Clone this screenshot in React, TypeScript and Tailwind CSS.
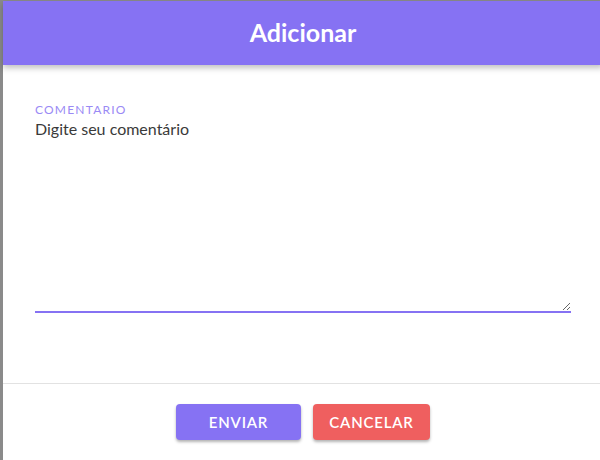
export default function App() {
  return (
    <div className="h-[460px] w-[600px] overflow-hidden bg-[#8a8a8a] pt-[1px] pl-[3px]" style={{ fontFamily: "Lato, 'Noto Sans', sans-serif" }}>
      <div className="flex h-[500px] w-[600px] flex-col bg-white">
        <div className="relative z-10 flex h-[64px] shrink-0 items-center justify-center bg-[#8672f3] shadow-[0_3px_6px_rgba(0,0,0,0.25)]">
          <h2 className="text-[25px] font-bold text-white">Adicionar</h2>
        </div>
        <div className="px-8 pt-[38px]">
          <label className="block text-[12px] leading-[14px] tracking-[1.2px] text-[#9a8af5]">COMENTARIO</label>
          <textarea
            className="mt-[2px] block h-[194px] w-[536px] resize-y border-b-2 border-[#8672f3] text-[16px] leading-[20px] text-[#3a3a3a] placeholder-[#3a3a3a] outline-none"
            placeholder="Digite seu comentário"
          />
        </div>
        <div className="mt-[70px] border-t border-[#e2e2e2]" />
        <div className="flex justify-center gap-3 pt-[20px]">
          <button className="h-[36px] w-[125px] rounded bg-[#8672f3] text-[15px] font-semibold tracking-[0.8px] text-white shadow-[0_2px_3px_rgba(0,0,0,0.3)]">
            ENVIAR
          </button>
          <button className="h-[36px] w-[117px] rounded bg-[#ef5f5f] text-[15px] font-semibold tracking-[0.8px] text-white shadow-[0_2px_3px_rgba(0,0,0,0.3)]">
            CANCELAR
          </button>
        </div>
      </div>
    </div>
  );
}
